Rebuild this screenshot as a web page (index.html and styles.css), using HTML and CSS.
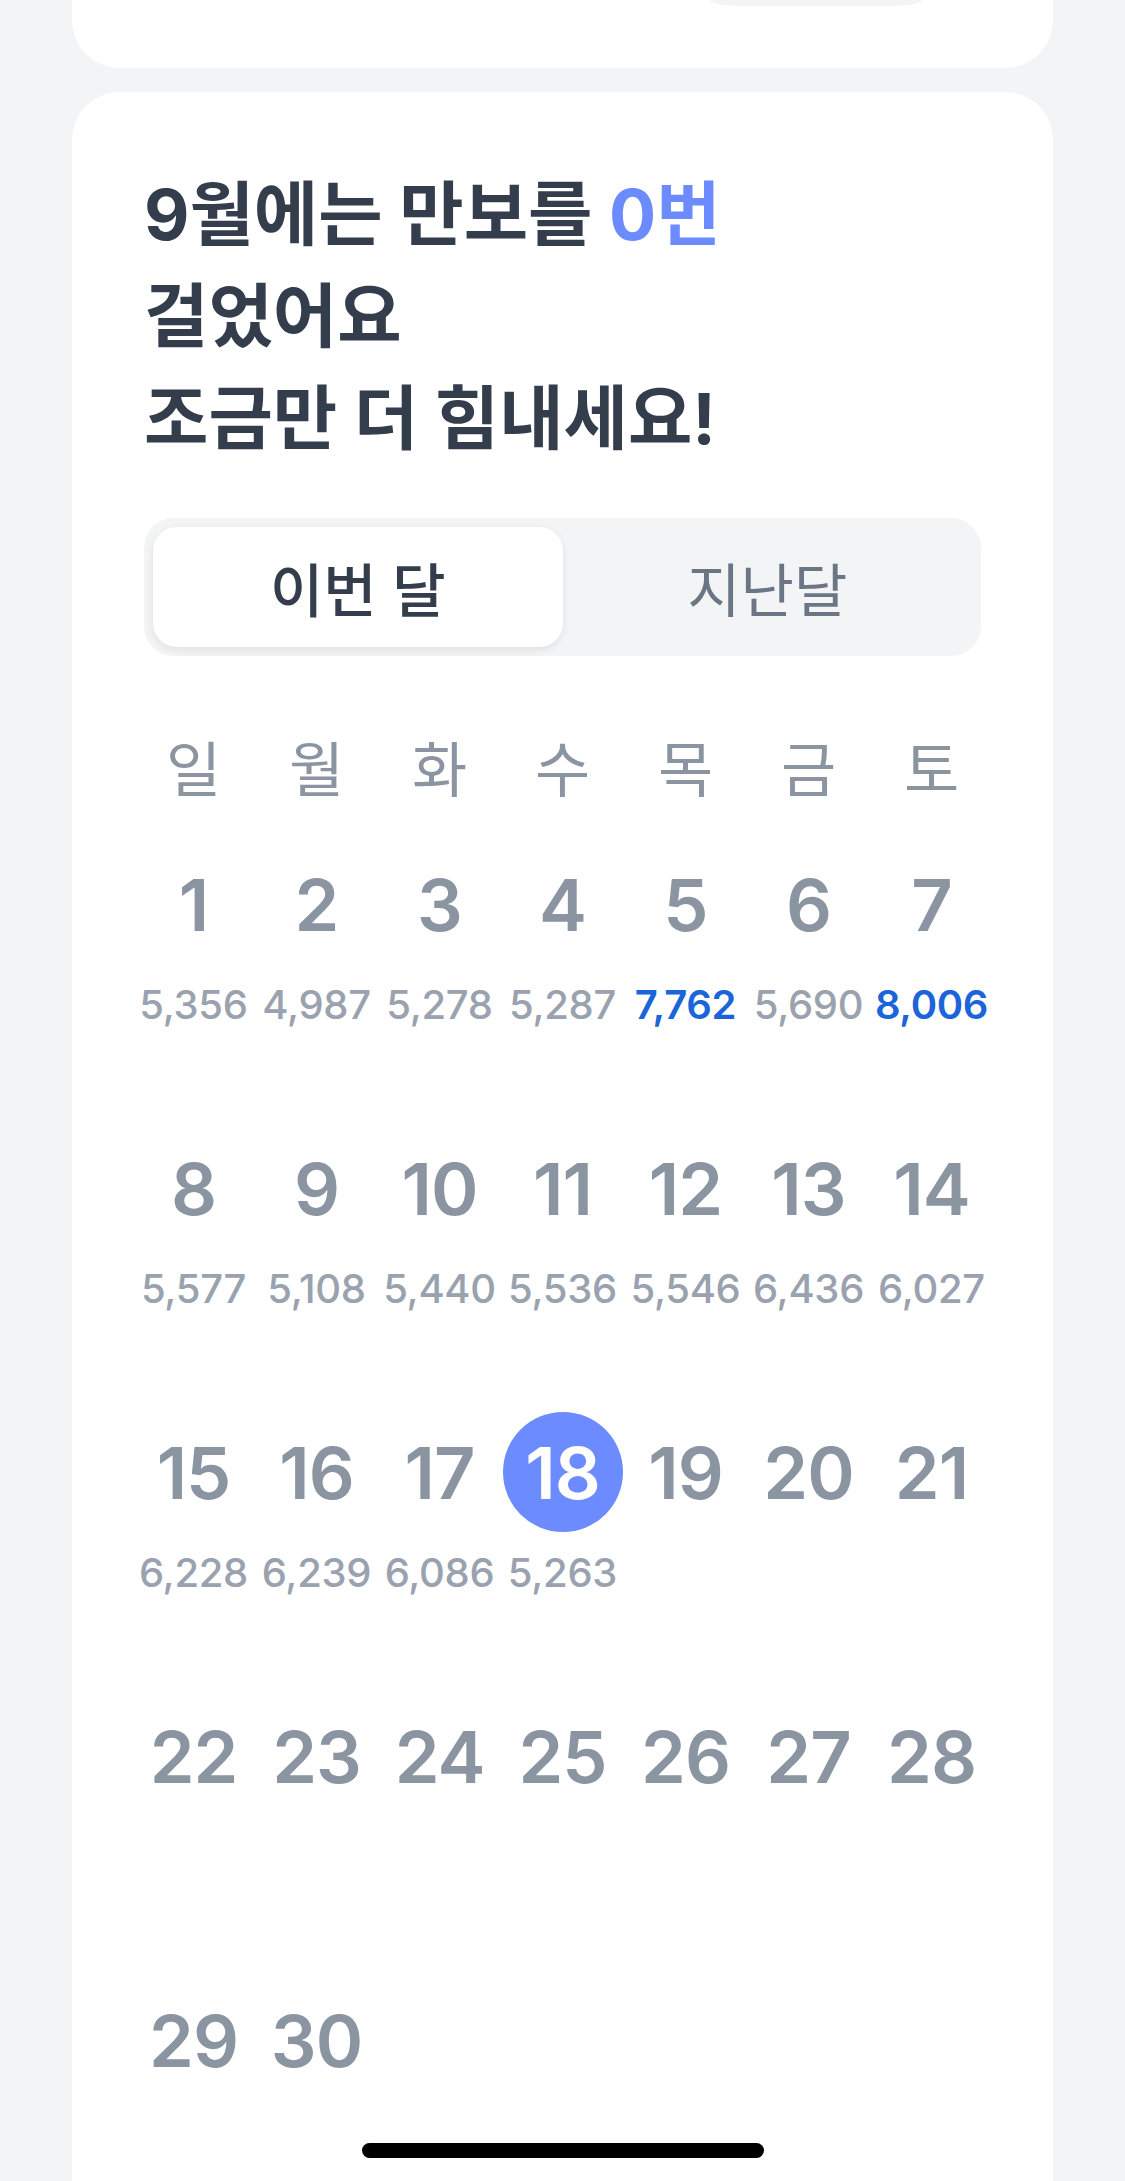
FILE: index.html
```html
<!DOCTYPE html>
<html lang="ko">
<head>
  <meta charset="UTF-8" />
  <meta name="viewport" content="width=device-width, initial-scale=1.0" />
  <title>만보 달력</title>
  <link rel="stylesheet" href="styles.css">
</head>
<body>

<div class="screen">
  <section class="card card-top">
    <div class="top-pill"></div>
  </section>

  <section class="card card-cal">
    <h1 class="title">9월에는 만보를 <em>0번</em><br>걸었어요<br>조금만 더 힘내세요!</h1>

    <div class="tabs">
      <button class="tab active" type="button">이번 달</button>
      <button class="tab" type="button">지난달</button>
    </div>

    <div class="week">
      <span>일</span><span>월</span><span>화</span><span>수</span><span>목</span><span>금</span><span>토</span>
    </div>

    <div class="days">
      <div class="day"><div class="num">1</div><div class="steps">5,356</div></div>
      <div class="day"><div class="num">2</div><div class="steps">4,987</div></div>
      <div class="day"><div class="num">3</div><div class="steps">5,278</div></div>
      <div class="day"><div class="num">4</div><div class="steps">5,287</div></div>
      <div class="day"><div class="num">5</div><div class="steps good">7,762</div></div>
      <div class="day"><div class="num">6</div><div class="steps">5,690</div></div>
      <div class="day"><div class="num">7</div><div class="steps good">8,006</div></div>

      <div class="day"><div class="num">8</div><div class="steps">5,577</div></div>
      <div class="day"><div class="num">9</div><div class="steps">5,108</div></div>
      <div class="day"><div class="num">10</div><div class="steps">5,440</div></div>
      <div class="day"><div class="num">11</div><div class="steps">5,536</div></div>
      <div class="day"><div class="num">12</div><div class="steps">5,546</div></div>
      <div class="day"><div class="num">13</div><div class="steps">6,436</div></div>
      <div class="day"><div class="num">14</div><div class="steps">6,027</div></div>

      <div class="day"><div class="num">15</div><div class="steps">6,228</div></div>
      <div class="day"><div class="num">16</div><div class="steps">6,239</div></div>
      <div class="day"><div class="num">17</div><div class="steps">6,086</div></div>
      <div class="day"><div class="num today">18</div><div class="steps">5,263</div></div>
      <div class="day"><div class="num">19</div></div>
      <div class="day"><div class="num">20</div></div>
      <div class="day"><div class="num">21</div></div>

      <div class="day"><div class="num">22</div></div>
      <div class="day"><div class="num">23</div></div>
      <div class="day"><div class="num">24</div></div>
      <div class="day"><div class="num">25</div></div>
      <div class="day"><div class="num">26</div></div>
      <div class="day"><div class="num">27</div></div>
      <div class="day"><div class="num">28</div></div>

      <div class="day"><div class="num">29</div></div>
      <div class="day"><div class="num">30</div></div>
    </div>
  </section>
</div>

<div class="home-indicator"></div>

</body>
</html>
```

FILE: styles.css
```css
body {
  margin: 0;
  background: #f2f4f6;
  font-family: 'Inter', 'Noto Sans CJK KR', sans-serif;
}
.screen {
  height: 2181px;
  overflow: hidden;
  padding: 0 72px;
}
.card {
  background: #fff;
}
.card-top {
  height: 68px;
  border-radius: 0 0 48px 48px;
  display: flex;
  justify-content: flex-end;
  padding-right: 131px;
}
.top-pill {
  width: 212px;
  height: 6px;
  background: #f2f4f6;
  border-radius: 0 0 32px 32px / 0 0 6px 6px;
}
.card-cal {
  margin-top: 24px;
  border-radius: 48px 48px 0 0;
  padding: 72px 72px 0;
}
.title {
  margin: 0;
  font-size: 70px;
  line-height: 102px;
  font-weight: 700;
  color: #333d4b;
}
.title em {
  font-style: normal;
  color: #6b8bff;
}
.tabs {
  display: flex;
  margin-top: 48px;
  padding: 9px;
  background: #f2f4f6;
  border-radius: 30px;
}
.tab {
  flex: 1;
  height: 120px;
  border: none;
  border-radius: 24px;
  background: transparent;
  font-family: inherit;
  font-size: 58px;
  font-weight: 400;
  color: #6b7684;
  padding: 0;
}
.tab.active {
  background: #fff;
  color: #333d4b;
  font-weight: 500;
  box-shadow: 0 3px 8px rgba(0,0,0,0.08);
}
.week, .days {
  display: grid;
  grid-template-columns: repeat(7, 1fr);
  margin-left: -12px;
  margin-right: -12px;
}
.week {
  margin-top: 72px;
}
.week span {
  text-align: center;
  font-size: 60px;
  line-height: 84px;
  color: #8b95a1;
}
.days {
  margin-top: 32px;
}
.day {
  height: 284px;
  display: flex;
  flex-direction: column;
  align-items: center;
}
.num {
  width: 120px;
  height: 120px;
  border-radius: 50%;
  display: flex;
  align-items: center;
  justify-content: center;
  font-size: 72px;
  font-weight: 600;
  color: #8b95a1;
  letter-spacing: -1px;
}
.num.today {
  background: #6b8bff;
  color: #fff;
}
.steps {
  margin-top: 14px;
  font-size: 40px;
  line-height: 54px;
  font-weight: 500;
  color: #99a2ae;
  letter-spacing: -0.3px;
}
.steps.good {
  color: #1b64da;
  font-weight: 600;
}
.home-indicator {
  position: fixed;
  left: 50%;
  bottom: 23px;
  width: 402px;
  height: 15px;
  margin-left: -201px;
  border-radius: 8px;
  background: #000;
}
```
